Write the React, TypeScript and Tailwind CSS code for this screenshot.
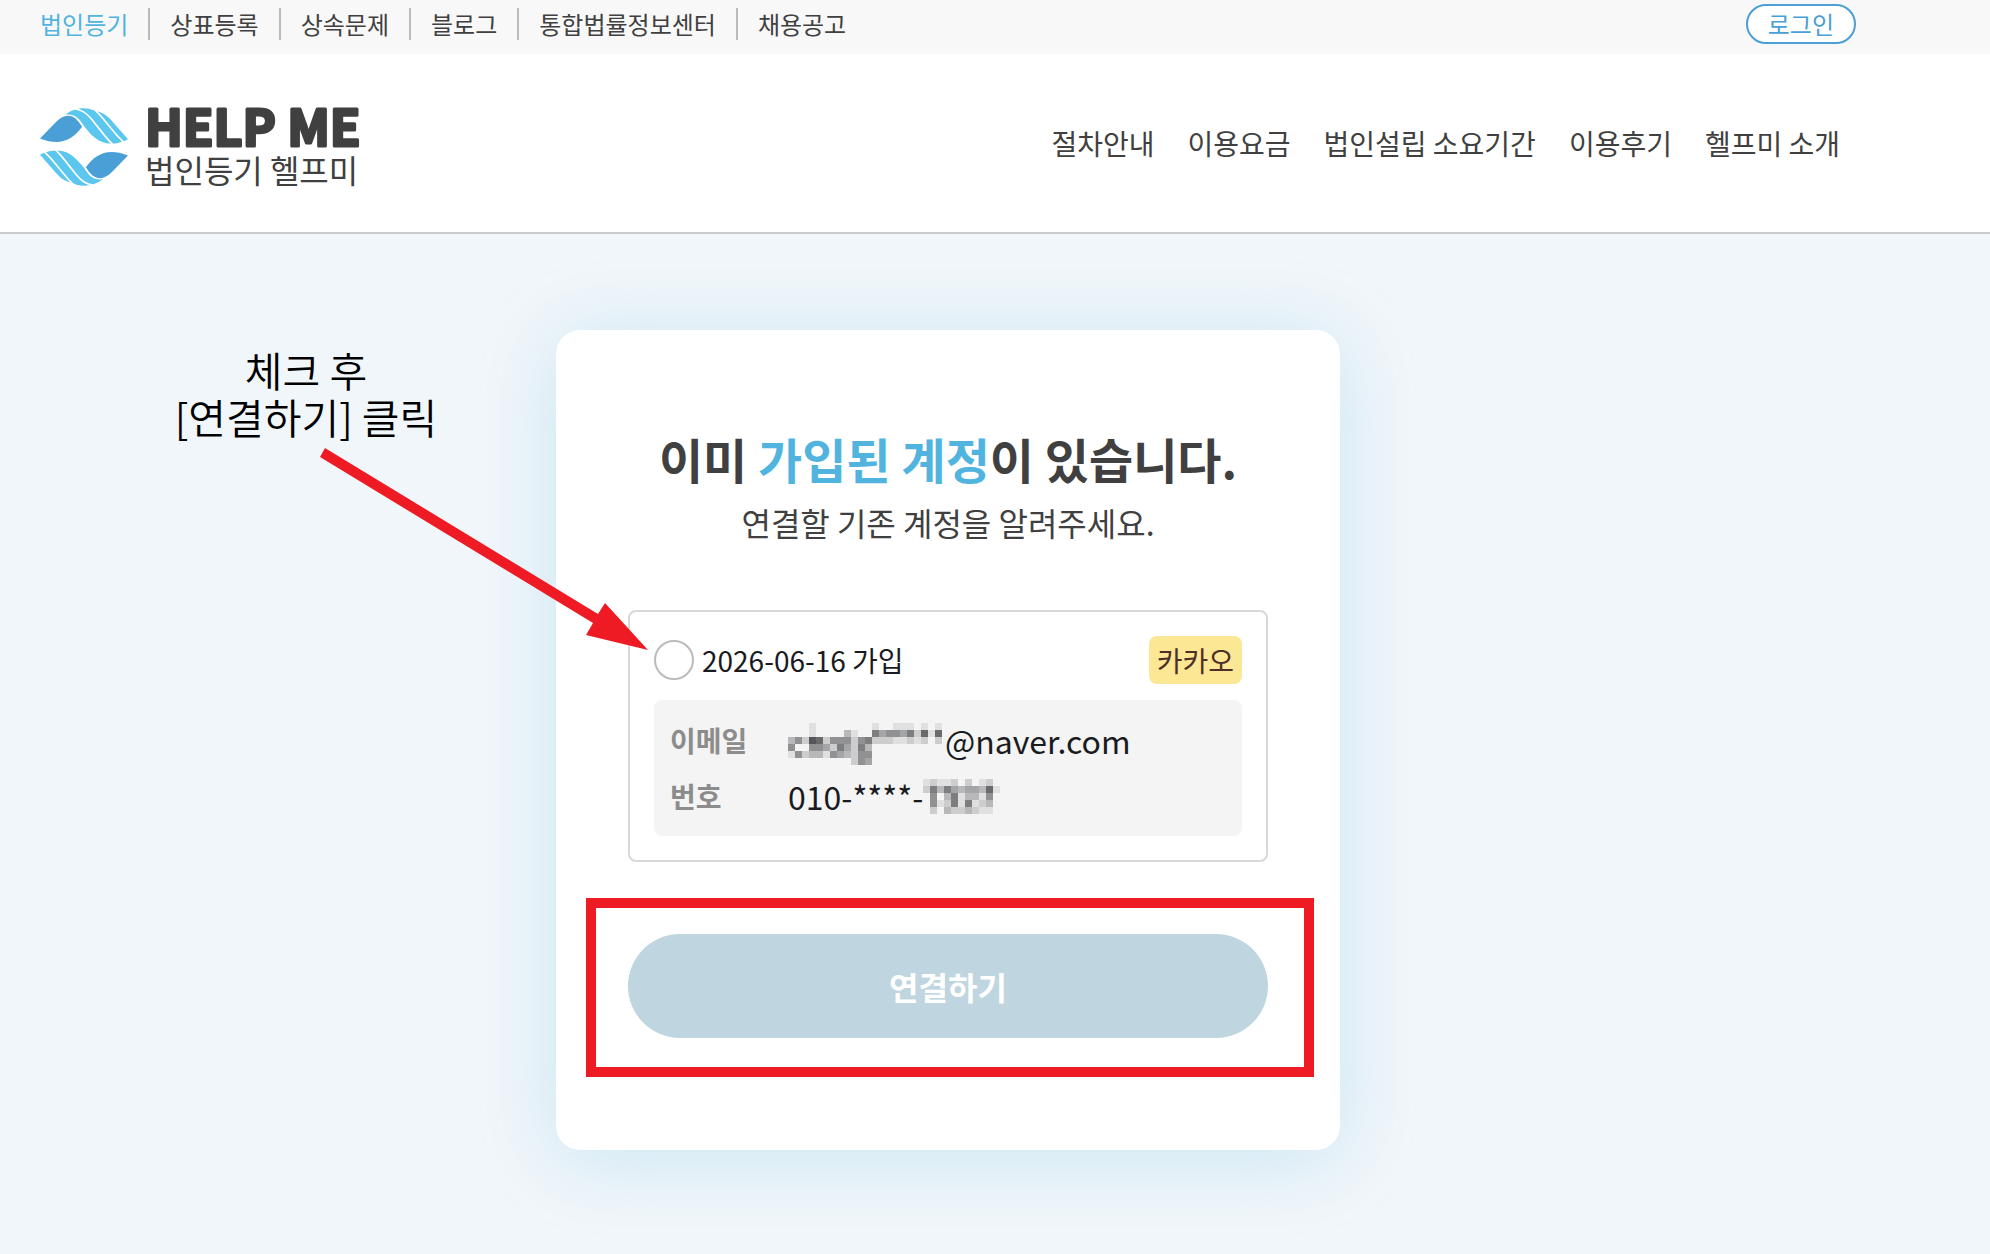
const sites = ["상표등록", "상속문제", "블로그", "통합법률정보센터", "채용공고"];
const menu = ["절차안내", "이용요금", "법인설립 소요기간", "이용후기", "헬프미 소개"];

/* Each digit is the darkness of one 7px mosaic cell: 0 is clear, 9 is darkest. */
const emailMosaic = [
  "0000000000000000000000",
  "0001000000001001110101",
  "0001000031006455462717",
  "3528725552562221121202",
  "5005542642630000000000",
  "1523315432550000000000",
  "0000000002540000000000",
];
const phoneMosaic = [
  "12112020120",
  "26364344371",
  "05036133150",
  "05126161230",
  "02032232110",
];

function Mosaic({ rows, label }: { rows: string[]; label: string }) {
  const cols = rows[0].length;
  return (
    <svg
      role="img"
      aria-label={label}
      width={cols * 7}
      height={rows.length * 7}
      shapeRendering="crispEdges"
    >
      {rows.map((row, y) =>
        row.split("").map((v, x) =>
          v === "0" ? null : (
            <rect key={`${x}-${y}`} x={x * 7} y={y * 7} width="7" height="7" fill="#1a1b20" opacity={Number(v) / 11} />
          ),
        ),
      )}
    </svg>
  );
}

function LogoHalf() {
  return (
    <>
      <path fill="#4a9fd6" d="M30 132 L76 85 C96 64 116 58 137 72 Q148 82 157 97 C128 136 92 156 30 132Z" />
      <path
        fill="#5bc6ee"
        d="M106 61 C130 42 165 36 192 48 L202 51 C222 56 234 66 246 79 L295 134 Q288 139 280 140 C268 146 254 148 242 147 C206 146 186 124 161 93 C146 68 132 58 106 61Z"
      />
      <path
        fill="none"
        stroke="white"
        strokeWidth="5"
        d="M136 44 C158 46 172 58 185 74 L226 125 Q236 137 248 149 M190 42 C212 60 225 80 240 97 Q262 125 284 145"
      />
    </>
  );
}

export default function App() {
  return (
    <div className="min-h-screen bg-[#f1f6fa] font-['Noto_Sans_CJK_KR',sans-serif] text-[#404040]">
      <div className="bg-[#f8f8f8] pr-[94px]">
        <div className="flex h-[54px] items-center justify-between px-10 text-2xl">
          <nav aria-label="사이트" className="mb-[6px] flex h-8 items-center">
            <a href="#" className="pr-5 leading-8 text-[#50b4df]">법인등기</a>
            {sites.map((s) => (
              <a key={s} href="#" className="border-l-2 border-[#bbb] px-5 leading-8">{s}</a>
            ))}
          </nav>
          <button className="mb-[6px] h-10 rounded-full border-2 border-[#4a9fd6] bg-white px-5 leading-9 text-[#4a9fd6]">
            로그인
          </button>
        </div>
      </div>

      <header className="border-b-2 border-[#ccc] bg-white pr-[94px]">
        <div className="flex h-[178px] items-center justify-between pr-14 pl-10">
          <a href="#" className="flex items-center gap-[17px] pt-2">
            <svg width="88" height="78" viewBox="30 41 265 233" preserveAspectRatio="none" aria-hidden="true">
              <LogoHalf />
              <g transform="rotate(180 162.5 157.5)">
                <LogoHalf />
              </g>
            </svg>
            <span className="flex flex-col">
              <svg width="220" height="44" className="overflow-visible">
                <text
                  x="0"
                  y="44"
                  fill="#404040"
                  stroke="#404040"
                  strokeWidth="3"
                  strokeLinejoin="round"
                  className="text-[50px] font-bold"
                >
                  HELP ME
                </text>
              </svg>
              <span className="text-[32px] leading-[46px]">법인등기 헬프미</span>
            </span>
          </a>
          <nav aria-label="메뉴" className="flex gap-[33px] text-[28px]">
            {menu.map((m) => (
              <a key={m} href="#">{m}</a>
            ))}
          </nav>
        </div>
      </header>

      <main className="flex justify-center py-24 pr-[94px]">
        <section className="relative w-[784px] rounded-3xl bg-white px-[72px] pt-24 pb-28 shadow-[0_8px_80px_rgba(80,180,225,0.24)]">
          <h1 className="text-center text-[48px] leading-[64px] font-bold">
            이미 <span className="text-[#50b4df]">가입된 계정</span>이 있습니다.
          </h1>
          <p className="mt-2 text-center text-[32px] leading-[48px]">연결할 기존 계정을 알려주세요.</p>

          <div className="mt-16 rounded-lg border-2 border-[#d8d8d8] p-6 text-[28px]">
            <div className="flex items-center justify-between text-[#1a1b20]">
              <label className="flex items-center gap-2">
                <input type="radio" name="account" className="size-10 appearance-none rounded-full border-2 border-[#bbb] bg-white checked:border-[12px]" />
                2026-06-16 가입
              </label>
              <span className="rounded-lg bg-[#fce794] px-2 leading-[48px] text-[#4f2f25]">카카오</span>
            </div>
            <dl className="mt-4 grid grid-cols-[118px_1fr] items-center rounded-lg bg-[#f4f4f4] px-4 py-3 leading-[56px]">
              <dt className="font-bold text-[#8c8c8c]">이메일</dt>
              <dd className="flex h-14 items-center gap-[3px] text-[32px] text-[#1a1b20]">
                <Mosaic rows={emailMosaic} label="가려진 이메일" />
                @naver.com
              </dd>
              <dt className="font-bold text-[#8c8c8c]">번호</dt>
              <dd className="flex h-14 items-center text-[32px] text-[#1a1b20]">
                010-****-
                <Mosaic rows={phoneMosaic} label="가려진 번호" />
              </dd>
            </dl>
          </div>

          <div className="relative mt-[72px]">
            <button className="block h-[104px] w-full rounded-full bg-[#bfd6e0] text-[32px] font-bold text-white">연결하기</button>
            <div className="pointer-events-none absolute -top-9 -right-[46px] -bottom-[39px] -left-[42px] border-[10px] border-[#ee1b24]" />
          </div>

          <p className="absolute top-4 -left-[390px] w-[280px] text-center text-[41px] leading-[47px] font-[350] text-black">
            체크 후<br />[연결하기] 클릭
          </p>
          <svg className="pointer-events-none absolute top-[118px] -left-[237px]" width="330" height="203" aria-hidden="true">
            <path fill="#ee1b24" d="M6 0 L279 166 L286 155 L329 202 L267 187 L274 175 L1 9Z" />
          </svg>
        </section>
      </main>
    </div>
  );
}
